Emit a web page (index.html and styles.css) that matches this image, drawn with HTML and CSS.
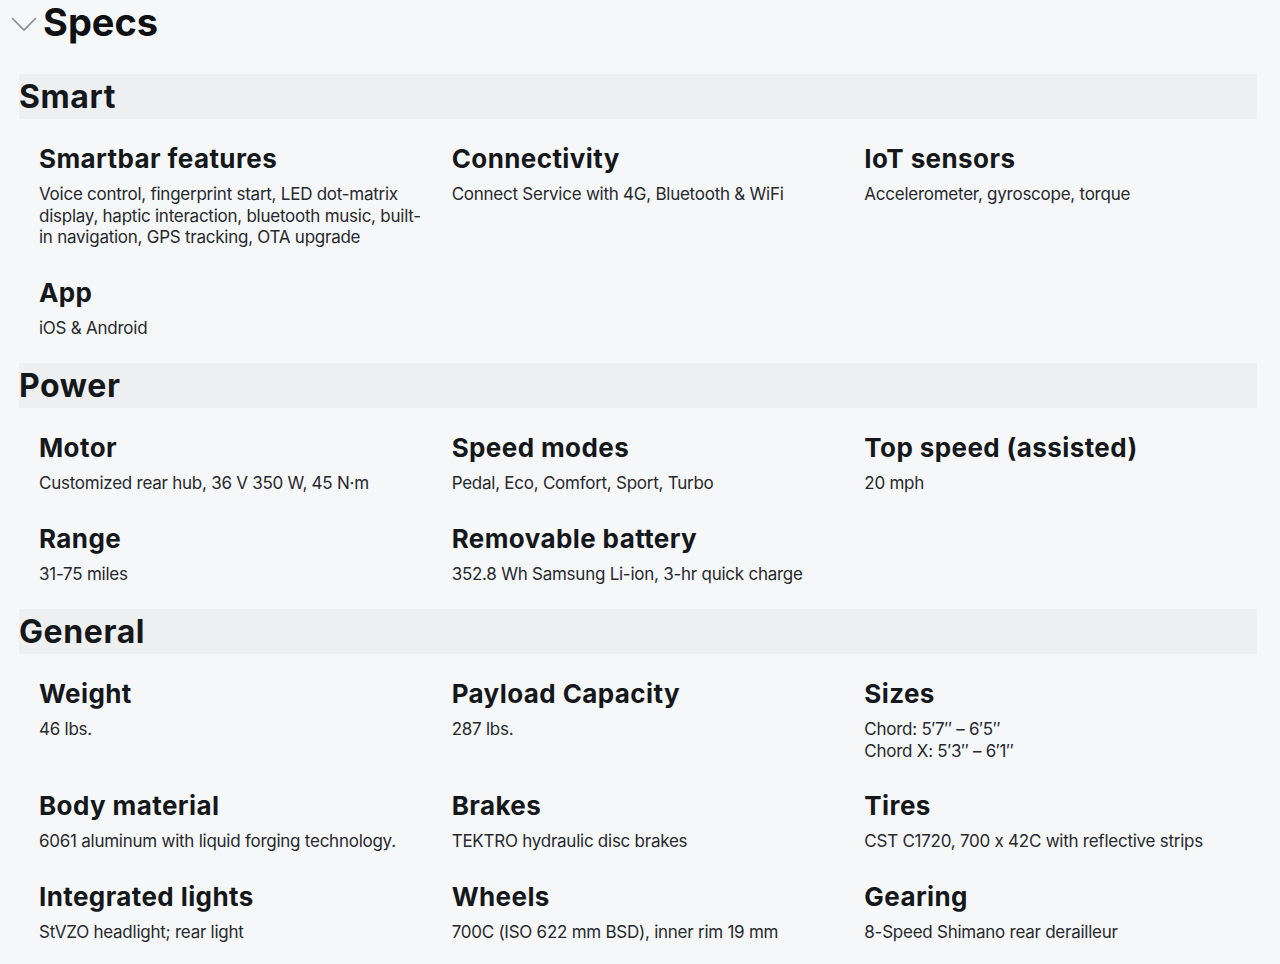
FILE: index.html
```html
<!DOCTYPE html>
<html>
<head>
<meta charset="utf-8">
<link rel="stylesheet" href="styles.css">
</head>
<body>
<div class="page">
  <div class="specs-head">
    <svg class="chev" width="26" height="16" viewBox="0 0 26 16"><path d="M1 2 L13 14 L25 2" fill="none" stroke="#8a8c90" stroke-width="1.6"/></svg>
    <h1>Specs</h1>
  </div>

  <section class="group">
    <h2 class="band">Smart</h2>
    <div class="grid">
      <div class="item"><h3>Smartbar features</h3><p>Voice control, fingerprint start, LED dot-matrix display, haptic interaction, bluetooth music, built-in navigation, GPS tracking, OTA upgrade</p></div>
      <div class="item"><h3>Connectivity</h3><p>Connect Service with 4G, Bluetooth &amp; WiFi</p></div>
      <div class="item"><h3>IoT sensors</h3><p>Accelerometer, gyroscope, torque</p></div>
      <div class="item"><h3>App</h3><p>iOS &amp; Android</p></div>
    </div>
  </section>

  <section class="group">
    <h2 class="band">Power</h2>
    <div class="grid">
      <div class="item"><h3>Motor</h3><p>Customized rear hub, 36 V 350 W, 45 N·m</p></div>
      <div class="item"><h3>Speed modes</h3><p>Pedal, Eco, Comfort, Sport, Turbo</p></div>
      <div class="item"><h3>Top speed (assisted)</h3><p>20 mph</p></div>
      <div class="item"><h3>Range</h3><p>31-75 miles</p></div>
      <div class="item"><h3>Removable battery</h3><p>352.8 Wh Samsung Li-ion, 3-hr quick charge</p></div>
    </div>
  </section>

  <section class="group">
    <h2 class="band">General</h2>
    <div class="grid">
      <div class="item"><h3>Weight</h3><p>46 lbs.</p></div>
      <div class="item"><h3>Payload Capacity</h3><p>287 lbs.</p></div>
      <div class="item"><h3>Sizes</h3><p>Chord: 5′7″ – 6′5″<br>Chord X: 5′3″ – 6′1″</p></div>
      <div class="item"><h3>Body material</h3><p>6061 aluminum with liquid forging technology.</p></div>
      <div class="item"><h3>Brakes</h3><p>TEKTRO hydraulic disc brakes</p></div>
      <div class="item"><h3>Tires</h3><p>CST C1720, 700 x 42C with reflective strips</p></div>
      <div class="item"><h3>Integrated lights</h3><p>StVZO headlight; rear light</p></div>
      <div class="item"><h3>Wheels</h3><p>700C (ISO 622 mm BSD), inner rim 19 mm</p></div>
      <div class="item"><h3>Gearing</h3><p>8-Speed Shimano rear derailleur</p></div>
    </div>
  </section>
</div>
</body>
</html>
```

FILE: styles.css
```css
html, body {
  margin: 0;
  padding: 0;
  background: #f6f7f9;
}
body {
  font-family: Inter, "Noto Sans", sans-serif;
  font-feature-settings: "calt" 0;
  color: #1a1d20;
}
.page {
  width: 1238px;
  padding: 0 0 0 19px;
}
.specs-head {
  display: flex;
  align-items: center;
  height: 44px;
  margin: 0 0 30px -8px;
}
.chev {
  margin: 4px 6px 0 0;
}
h1 {
  margin: 0;
  font-size: 38px;
  font-weight: 700;
  line-height: 44px;
  color: #0e1012;
}
.band {
  margin: 0;
  height: 45px;
  background: #eeeff1;
  font-size: 32px;
  font-weight: 700;
  line-height: 45px;
  letter-spacing: 0.6px;
  color: #15181b;
}
.grid {
  display: grid;
  grid-template-columns: repeat(3, 1fr);
  row-gap: 29px;
  padding: 25px 0 24px;
}
.item {
  padding-left: 20px;
}
.item h3 {
  margin: 0;
  font-size: 26px;
  line-height: 30px;
  font-weight: 700;
  letter-spacing: 0.4px;
  color: #15181b;
}
.item p {
  margin: 10px 0 0;
  font-size: 17px;
  line-height: 21.5px;
  letter-spacing: -0.25px;
  color: #26292d;
}
```
